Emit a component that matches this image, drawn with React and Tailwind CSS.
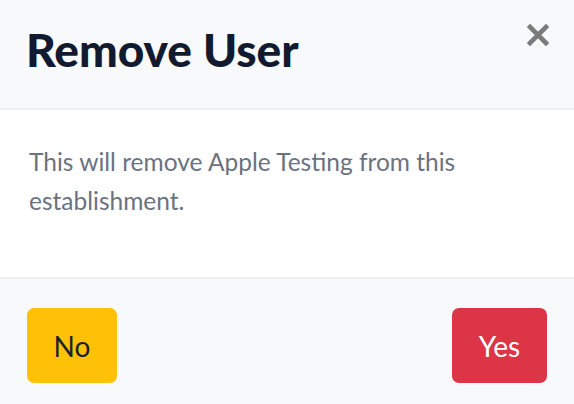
import React from 'react';

const CloseIcon = () => (
  <svg width="22" height="22" viewBox="0 0 22 22" aria-hidden="true">
    <path d="M3 3 L19 19 M19 3 L3 19" stroke="#7b7b7b" strokeWidth="4.6" strokeLinecap="square" fill="none" />
  </svg>
);

const RemoveUserModal = ({ userName, onNo, onYes, onClose }) => {
  return (
    <div className="w-[574px] h-[404px] flex flex-col bg-white" style={{ fontFamily: 'Lato, "Open Sans", sans-serif' }}>
      <div className="h-[110px] shrink-0 flex justify-between items-start bg-[#f8f9fb] border-b-2 border-[#eceff3] pl-[26px] pr-[25px]">
        <h2 className="pt-[27px] text-[46px] leading-none font-black text-[#111a2e]">Remove User</h2>
        <button onClick={onClose} className="mt-[24px] p-0">
          <CloseIcon />
        </button>
      </div>

      <div className="h-[169px] shrink-0 border-b-2 border-[#eceff3] px-[29px] pt-[32px]">
        <p className="text-[24.5px] leading-[39px] text-[#6b7280] max-w-[450px]">
          This will remove {userName} from this establishment.
        </p>
      </div>

      <div className="flex-1 flex justify-between items-start bg-[#f8f9fb] pl-[27px] pr-[27px] pt-[29px]">
        <button onClick={onNo} className="w-[90px] h-[75px] rounded-[7px] bg-[#ffc107] text-[28px] text-[#1a2230]">
          No
        </button>
        <button onClick={onYes} className="w-[95px] h-[75px] rounded-[7px] bg-[#dc3545] text-[28px] text-white">
          Yes
        </button>
      </div>
    </div>
  );
};

export default function App() {
  return <RemoveUserModal userName="Apple Testing" />;
}
